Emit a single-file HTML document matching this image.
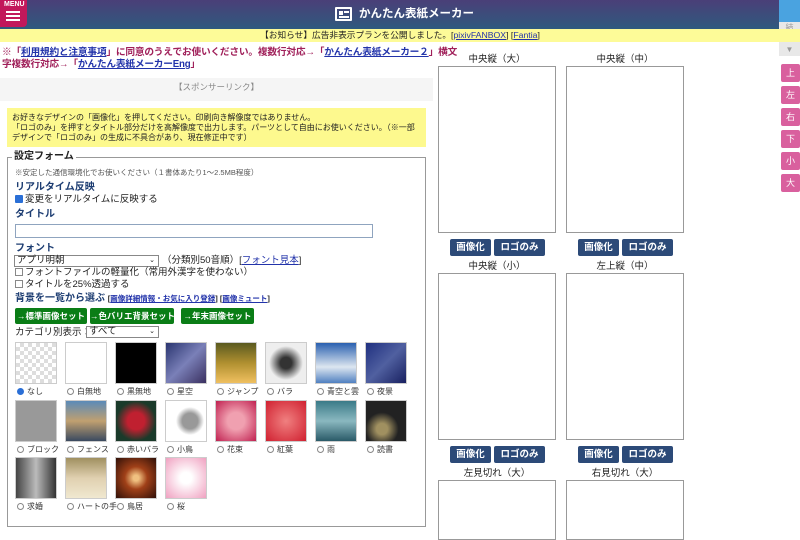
<!DOCTYPE html>
<html><head><meta charset="utf-8">
<style>
*{margin:0;padding:0;box-sizing:border-box}
body{width:800px;height:513px;overflow:hidden;position:relative;background:#fff;font-family:"Liberation Sans","Noto Sans CJK JP",sans-serif;color:#222;line-height:1.2}
.a{position:absolute;white-space:nowrap}
#hd{left:0;top:0;width:800px;height:29px;background:linear-gradient(#4a3f78,#2f5a7e)}
#menu{left:0;top:0;width:27px;height:27px;background:#c2185b;border-radius:0 0 4px 0}
#yb{left:0;top:29px;width:800px;height:13px;background:#fdfb98;font-size:8.7px;text-align:center;line-height:13px}
a{color:#2233aa;text-decoration:underline}
.note{left:2px;font-size:9.7px;font-weight:bold;color:#a0205a;line-height:12px;letter-spacing:-0.2px}
.thumb{position:absolute;width:42px;height:42px;border:1px solid #ccc}
.lbl{position:absolute;font-size:8px;color:#333;line-height:10px}
.rad{display:inline-block;width:7px;height:7px;border:1px solid #888;border-radius:50%;vertical-align:-1px;margin-right:3px}
.gb{position:absolute;top:308px;height:16px;background:#0a7d16;color:#fff;font-size:8.5px;font-weight:bold;text-align:center;line-height:16px;border-radius:2px;white-space:nowrap;overflow:hidden}
.box{position:absolute;width:118px;border:1px solid #999;background:#fff}
.pl{position:absolute;width:118px;text-align:center;font-size:9.5px;line-height:12px}
.bb{position:absolute;height:17px;background:#2c4a78;color:#fff;font-size:9.5px;font-weight:bold;text-align:center;line-height:17px;border-radius:2px}
.pk{position:absolute;left:781px;width:19px;height:18px;background:#d9609e;color:#fff;font-size:9px;text-align:center;line-height:18px;border-radius:2px}
.blue{color:#1d3d72;font-size:10px;font-weight:bold;line-height:12px}
.t{font-size:9.5px;line-height:12px}
</style></head><body>
<div id="hd" class="a"></div>
<div id="menu" class="a"><div style="position:absolute;left:4px;top:1px;color:#fff;font-size:7px;font-weight:bold;line-height:8px">MENU</div>
<div style="position:absolute;left:6px;top:11px;width:14px;height:2px;background:#fff"></div>
<div style="position:absolute;left:6px;top:15px;width:14px;height:2px;background:#fff"></div>
<div style="position:absolute;left:6px;top:19px;width:14px;height:2px;background:#fff"></div></div>
<div class="a" style="left:335px;top:7px;width:17px;height:14px;border:2px solid #fff;border-radius:1px"><div style="position:absolute;left:2px;top:2px;width:4px;height:4px;background:#fff"></div><div style="position:absolute;left:7px;top:2px;width:5px;height:1.5px;background:#fff"></div><div style="position:absolute;left:2px;top:7px;width:10px;height:1.5px;background:#fff"></div></div>
<div class="a" style="left:359px;top:7px;color:#fff;font-size:11.5px;font-weight:bold;line-height:15px">かんたん表紙メーカー</div>
<div class="a" style="left:779px;top:0;width:21px;height:22px;background:#4aa3e0"></div>
<div class="a" style="left:779px;top:22px;width:21px;height:34px;background:#e8e8e8;color:#999;font-size:8px;text-align:center;line-height:11px">結<br>果<br>▼</div>
<div id="yb" class="a">【お知らせ】広告非表示プランを公開しました。[<a>pixivFANBOX</a>] [<a>Fantia</a>]</div>
<div class="a note" style="top:47px">※「<a>利用規約と注意事項</a>」に同意のうえでお使いください。複数行対応→「<a>かんたん表紙メーカー２</a>」横文</div>
<div class="a note" style="top:59px">字複数行対応→「<a>かんたん表紙メーカーEng</a>」</div>
<div class="a" style="left:0;top:78px;width:433px;height:23px;background:#f5f5f5;font-size:8.5px;color:#888;text-align:center;line-height:18px">【スポンサーリンク】</div>
<div class="a" style="left:7px;top:108px;width:419px;height:39px;background:#fdf98e;font-size:8px;line-height:10px;padding:5px 5px;white-space:normal">お好きなデザインの「画像化」を押してください。印刷向き解像度ではありません。<br>「ロゴのみ」を押すとタイトル部分だけを高解像度で出力します。パーツとして自由にお使いください。（※一部デザインで「ロゴのみ」の生成に不具合があり、現在修正中です）</div>
<div class="a" style="left:7px;top:157px;width:419px;height:370px;border:1px solid #999"></div>
<div class="a" style="left:12px;top:151px;background:#fff;padding:0 2px;font-size:10px;font-weight:bold;line-height:12px">設定フォーム</div>
<div class="a" style="left:15px;top:168px;font-size:7.5px;color:#555;line-height:10px">※安定した通信環境化でお使いください（１書体あたり1〜2.5MB程度）</div>
<div class="a blue" style="left:15px;top:182px">リアルタイム反映</div>
<div class="a t" style="left:15px;top:194px"><span style="display:inline-block;width:8px;height:8px;background:#2a6fd6;border-radius:1px;vertical-align:-1px;margin-right:2px"></span>変更をリアルタイムに反映する</div>
<div class="a blue" style="left:15px;top:209px">タイトル</div>
<div class="a" style="left:15px;top:224px;width:358px;height:14px;border:1px solid #8fa4bf"></div>
<div class="a blue" style="left:15px;top:243px">フォント</div>
<div class="a" style="left:14px;top:255px;width:145px;height:12px;border:1px solid #888;font-size:9.5px;line-height:10px;padding-left:2px">アプリ明朝<span style="position:absolute;right:3px;font-size:7px">⌄</span></div>
<div class="a t" style="left:162px;top:255px">（分類別50音順）[<a>フォント見本</a>]</div>
<div class="a t" style="left:15px;top:267px"><span style="display:inline-block;width:8px;height:8px;border:1px solid #888;vertical-align:-1px;margin-right:2px"></span>フォントファイルの軽量化（常用外漢字を使わない）</div>
<div class="a t" style="left:15px;top:279px"><span style="display:inline-block;width:8px;height:8px;border:1px solid #888;vertical-align:-1px;margin-right:2px"></span>タイトルを25%透過する</div>
<div class="a blue" style="left:15px;top:293px">背景を一覧から選ぶ <span style="font-size:7.5px;color:#222">[<a>画像詳細情報・お気に入り登録</a>] [<a>画像ミュート</a>]</span></div>
<div class="gb" style="left:15px;width:72px">→標準画像セット</div>
<div class="gb" style="left:90px;width:84px">→色バリエ背景セット</div>
<div class="gb" style="left:181px;width:73px">→年末画像セット</div>
<div class="a t" style="left:15px;top:327px">カテゴリ別表示：</div>
<div class="a" style="left:86px;top:326px;width:73px;height:12px;border:1px solid #888;font-size:9.5px;line-height:10px;padding-left:2px">すべて<span style="position:absolute;right:3px;font-size:7px">⌄</span></div>

<div class="thumb" style="left:15px;top:342px;background-color:#fff;background-image:linear-gradient(45deg,#ddd 25%,transparent 25%,transparent 75%,#ddd 75%),linear-gradient(45deg,#ddd 25%,transparent 25%,transparent 75%,#ddd 75%);background-size:8px 8px;background-position:0 0,4px 4px"></div>
<div class="thumb" style="left:65px;top:342px;background:#fff"></div>
<div class="thumb" style="left:115px;top:342px;background:#000"></div>
<div class="thumb" style="left:165px;top:342px;background:linear-gradient(135deg,#2a3570,#7a80b8,#3a3060)"></div>
<div class="thumb" style="left:215px;top:342px;background:linear-gradient(#5a5a20,#b09030,#f0c060)"></div>
<div class="thumb" style="left:265px;top:342px;background:radial-gradient(#333 20%,#eee 60%)"></div>
<div class="thumb" style="left:315px;top:342px;background:linear-gradient(#2a60b0,#dde6f0 60%,#5080c0)"></div>
<div class="thumb" style="left:365px;top:342px;background:linear-gradient(135deg,#203080,#5060a0,#182060)"></div>
<div class="thumb" style="left:15px;top:400px;background:#999"></div>
<div class="thumb" style="left:65px;top:400px;background:linear-gradient(#5a8ab8,#c0a070,#3a4a60)"></div>
<div class="thumb" style="left:115px;top:400px;background:radial-gradient(#c02030 30%,#1a3a2a 70%)"></div>
<div class="thumb" style="left:165px;top:400px;background:radial-gradient(circle at 60% 50%,#999 25%,#fff 45%)"></div>
<div class="thumb" style="left:215px;top:400px;background:radial-gradient(#f0a0b0 30%,#c02050)"></div>
<div class="thumb" style="left:265px;top:400px;background:radial-gradient(#f08080,#d02030)"></div>
<div class="thumb" style="left:315px;top:400px;background:linear-gradient(#3a7a88,#8ab8c0,#2a5a68)"></div>
<div class="thumb" style="left:365px;top:400px;background:radial-gradient(circle at 40% 70%,#a09060 15%,#222 45%)"></div>
<div class="thumb" style="left:15px;top:457px;background:linear-gradient(90deg,#444,#bbb,#333)"></div>
<div class="thumb" style="left:65px;top:457px;background:linear-gradient(#a09060,#e0d0b0,#f0e8d0)"></div>
<div class="thumb" style="left:115px;top:457px;background:radial-gradient(#f0c080 10%,#a04018 40%,#301008)"></div>
<div class="thumb" style="left:165px;top:457px;background:radial-gradient(#fff 20%,#f0a0c0)"></div>

<div class="lbl" style="left:17px;top:387px"><span class="rad" style="background:#2a6fd6;border-color:#2a6fd6"></span>なし</div>
<div class="lbl" style="left:67px;top:387px"><span class="rad"></span>白無地</div>
<div class="lbl" style="left:117px;top:387px"><span class="rad"></span>黒無地</div>
<div class="lbl" style="left:167px;top:387px"><span class="rad"></span>星空</div>
<div class="lbl" style="left:217px;top:387px"><span class="rad"></span>ジャンプ</div>
<div class="lbl" style="left:267px;top:387px"><span class="rad"></span>バラ</div>
<div class="lbl" style="left:317px;top:387px"><span class="rad"></span>青空と雲</div>
<div class="lbl" style="left:367px;top:387px"><span class="rad"></span>夜景</div>
<div class="lbl" style="left:17px;top:445px"><span class="rad"></span>ブロック</div>
<div class="lbl" style="left:67px;top:445px"><span class="rad"></span>フェンス</div>
<div class="lbl" style="left:117px;top:445px"><span class="rad"></span>赤いバラ</div>
<div class="lbl" style="left:167px;top:445px"><span class="rad"></span>小鳥</div>
<div class="lbl" style="left:217px;top:445px"><span class="rad"></span>花束</div>
<div class="lbl" style="left:267px;top:445px"><span class="rad"></span>紅葉</div>
<div class="lbl" style="left:317px;top:445px"><span class="rad"></span>雨</div>
<div class="lbl" style="left:367px;top:445px"><span class="rad"></span>読書</div>
<div class="lbl" style="left:17px;top:502px"><span class="rad"></span>求婚</div>
<div class="lbl" style="left:67px;top:502px"><span class="rad"></span>ハートの手</div>
<div class="lbl" style="left:117px;top:502px"><span class="rad"></span>鳥居</div>
<div class="lbl" style="left:167px;top:502px"><span class="rad"></span>桜</div>

<div class="pl" style="left:438px;top:54px">中央縦（大）</div>
<div class="pl" style="left:566px;top:54px">中央縦（中）</div>
<div class="box" style="left:438px;top:66px;height:167px"></div>
<div class="box" style="left:566px;top:66px;height:167px"></div>
<div class="bb" style="left:450px;top:239px;width:41px">画像化</div>
<div class="bb" style="left:494px;top:239px;width:51px">ロゴのみ</div>
<div class="bb" style="left:578px;top:239px;width:41px">画像化</div>
<div class="bb" style="left:622px;top:239px;width:51px">ロゴのみ</div>
<div class="pl" style="left:438px;top:261px">中央縦（小）</div>
<div class="pl" style="left:566px;top:261px">左上縦（中）</div>
<div class="box" style="left:438px;top:273px;height:167px"></div>
<div class="box" style="left:566px;top:273px;height:167px"></div>
<div class="bb" style="left:450px;top:446px;width:41px">画像化</div>
<div class="bb" style="left:494px;top:446px;width:51px">ロゴのみ</div>
<div class="bb" style="left:578px;top:446px;width:41px">画像化</div>
<div class="bb" style="left:622px;top:446px;width:51px">ロゴのみ</div>
<div class="pl" style="left:438px;top:468px">左見切れ（大）</div>
<div class="pl" style="left:566px;top:468px">右見切れ（大）</div>
<div class="box" style="left:438px;top:480px;height:60px"></div>
<div class="box" style="left:566px;top:480px;height:60px"></div>

<div class="pk" style="top:64px">上</div>
<div class="pk" style="top:86px">左</div>
<div class="pk" style="top:108px">右</div>
<div class="pk" style="top:130px">下</div>
<div class="pk" style="top:152px">小</div>
<div class="pk" style="top:174px">大</div>
</body></html>
